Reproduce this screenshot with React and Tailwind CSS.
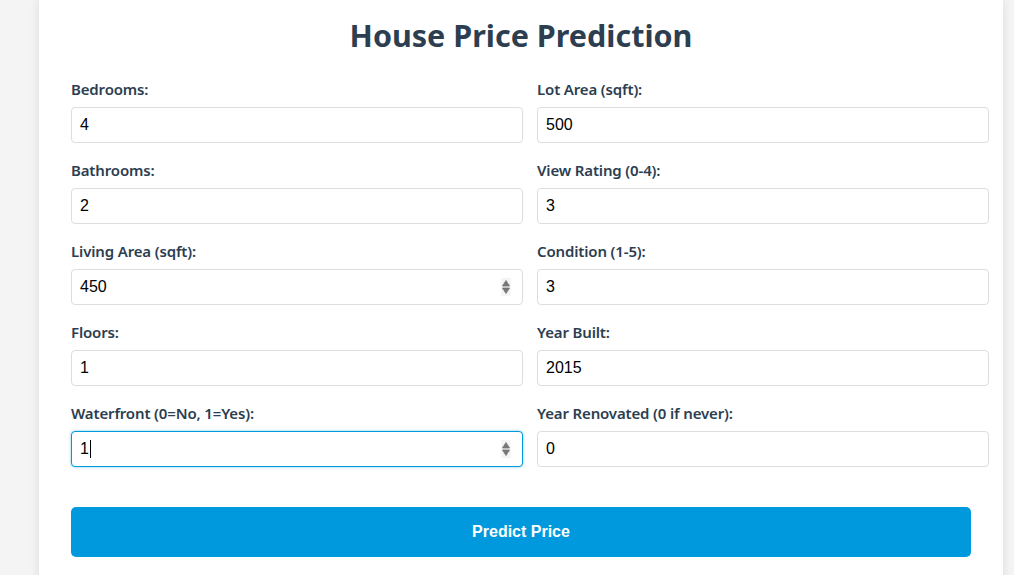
import React from "react";

const fields = [
  ["Bedrooms:", "4", false, false],
  ["Lot Area (sqft):", "500", false, false],
  ["Bathrooms:", "2", false, false],
  ["View Rating (0-4):", "3", false, false],
  ["Living Area (sqft):", "450", true, false],
  ["Condition (1-5):", "3", false, false],
  ["Floors:", "1", false, false],
  ["Year Built:", "2015", false, false],
  ["Waterfront (0=No, 1=Yes):", "1", true, true],
  ["Year Renovated (0 if never):", "0", false, false],
];

function Spinner() {
  return (
    <svg
      className="absolute right-[12px] top-[9px]"
      width="10"
      height="18"
      viewBox="0 0 10 18"
    >
      <rect x="0" y="0" width="10" height="18" fill="#f4f4f4" />
      <path d="M5 2.5 L8.5 8 L1.5 8 Z" fill="#767676" strokeLinejoin="round" stroke="#767676" strokeWidth="0.8" />
      <path d="M5 15.5 L8.5 10 L1.5 10 Z" fill="#767676" strokeLinejoin="round" stroke="#767676" strokeWidth="0.8" />
    </svg>
  );
}

function Field({ label, value, spin, focus }) {
  return (
    <div className="mb-[17px]">
      <label className="block mb-2 text-[15px] leading-5 font-semibold tracking-[-0.15px] text-[#2c3e50] [font-family:'Noto_Sans',sans-serif]">
        {label}
      </label>
      <div className="relative w-[452px]">
        <div
          className={
            "box-border w-[452px] h-[36px] px-2 flex items-center rounded-[4px] border bg-white text-base text-black [font-family:'Liberation_Sans',Arial,sans-serif] " +
            (focus
              ? "border-[#0099dd] shadow-[0_0_3px_rgba(0,153,221,0.5)]"
              : "border-[#dddddd]")
          }
        >
          <span>{value}</span>
          {focus && <span className="inline-block w-px h-[18px] bg-black ml-px" />}
        </div>
        {spin && <Spinner />}
      </div>
    </div>
  );
}

export default function App() {
  return (
    <div className="w-[1014px] h-[575px] overflow-hidden bg-[#f4f4f4]">
      <div className="ml-[39px] w-[964px] h-[600px] bg-white shadow-[0_0_10px_rgba(0,0,0,0.1)] px-8 pt-[14px]">
        <h1 className="text-center text-[30.5px] leading-[42px] font-bold text-[#2c3e50] [font-family:'Noto_Sans',sans-serif] mb-[23px]">
          House Price Prediction
        </h1>
        <div className="grid grid-cols-[434px_434px] gap-x-8">
          {fields.map(([l, v, s, f]) => (
            <Field key={l} label={l} value={v} spin={s} focus={f} />
          ))}
        </div>
        <button className="mt-[23px] w-[900px] h-[50px] rounded-[5px] bg-[#0099dd] text-white font-bold text-base [font-family:'Liberation_Sans',Arial,sans-serif]">
          Predict Price
        </button>
      </div>
    </div>
  );
}
